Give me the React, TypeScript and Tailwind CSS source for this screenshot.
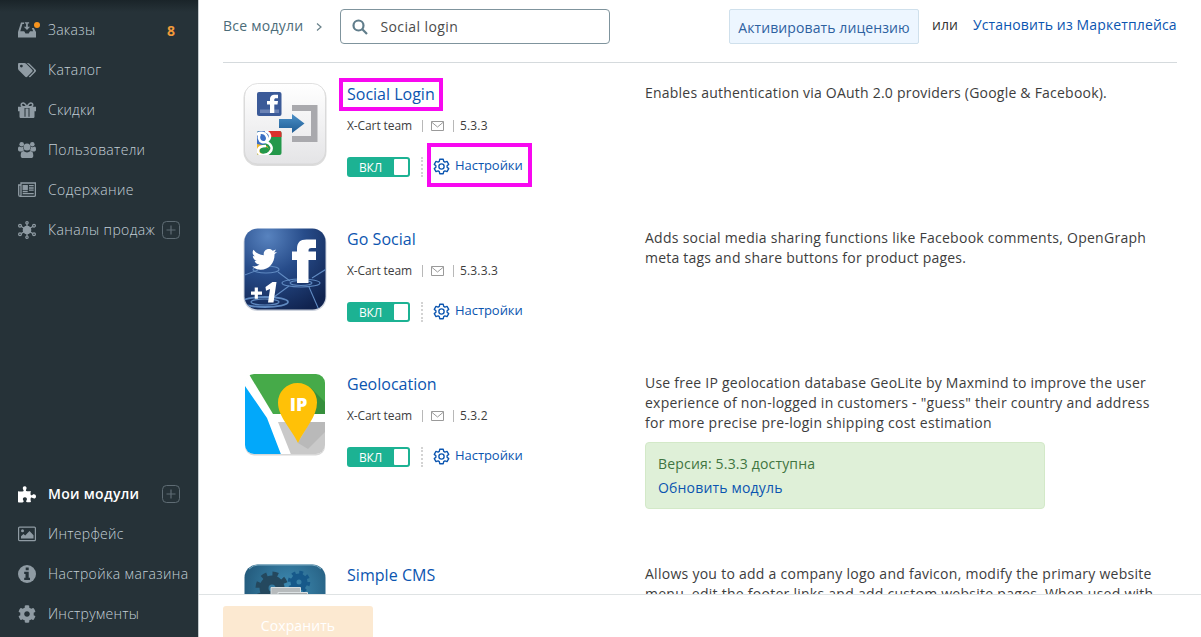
import type { ReactNode } from "react";
import { FaCog } from "react-icons/fa";

const svgClass = "h-[18px] w-[18px] shrink-0";

function InboxIcon() {
  return (
    <span className="relative block h-[18px] w-[18px]">
      <svg viewBox="0 0 18 18" className={svgClass} fill="currentColor">
        <path d="M0 11 3 1.500h3V3H4.400L2.300 10.300h3.900l1.300 2.200h3.200l1.300-2.200h3.200L13.800 7h2l2.200 4v5.500H0z" />
        <path d="M6.800 1.300h4.300v1.200H9.800v3.200h2.300L9 9 5.800 5.700h2.300V2.500H6.800z" />
      </svg>
      <i className="absolute left-[16px] top-[1px] h-[6px] w-[6px] rounded-full bg-[#f7941e]" />
    </span>
  );
}

function TagsIcon() {
  return (
    <svg viewBox="0 0 18 18" className={svgClass} fill="currentColor">
      <path fillRule="evenodd" d="M1.200 2h5.200c.6 0 1.300.3 1.800.8l6 6c.6.6.6 1.300 0 1.900l-5 5c-.6.6-1.300.6-1.900 0l-6-6C.4 8.800 0 8 0 7.400V3.200C0 2.500.5 2 1.200 2zM3.400 3.700a1.400 1.400 0 1 0 0 2.800 1.400 1.400 0 0 0 0-2.800z" />
      <path d="M8.400 2h1.400c.6 0 1.300.3 1.800.8l6 6c.6.6.6 1.300 0 1.900l-5 5c-.7.7-1.300.6-1.900.1l4.900-5c.6-.8.6-1.600-.1-2.300L9.800 2.900C9.300 2.500 8.900 2.200 8.400 2z" />
    </svg>
  );
}

function GiftIcon() {
  return (
    <svg viewBox="0 0 18 18" className={svgClass} fill="currentColor">
      <path d="M0 5.700h18v4.600h-6.500V7h-5v3.300H0zM1.500 10H6.500v7H3c-.9 0-1.500-.5-1.500-1.300zM11.500 10h5v5.700c0 .8-.6 1.300-1.500 1.300h-3.500zM7.500 7.500h3V16h-3zM6 15.700h6V17H6z" />
      <path d="M9 5.700C7.600 3.400 6.700 2 5.200 2c-2.600 0-2.600 3.700 0 3.700zM9 5.700C10.400 3.400 11.300 2 12.800 2c2.600 0 2.600 3.700 0 3.700z" fill="none" stroke="currentColor" strokeWidth="1.500" />
    </svg>
  );
}

function UsersIcon() {
  return (
    <svg viewBox="0 0 18 18" className={svgClass} fill="currentColor">
      <circle cx="3.700" cy="3.300" r="2.300" />
      <circle cx="14.300" cy="3.300" r="2.300" />
      <circle cx="9" cy="6" r="3.500" />
      <path d="M0 8.200C0 6.500.4 5.600 1.300 5.500c1.400.9 2.700.9 3.900.3-.3 1.500.2 2.700 1.100 3.600-1 0-1.800.3-2.500 1H1.600C.6 10.400 0 9.600 0 8.200zM18 8.200c0-1.700-.4-2.600-1.300-2.700-1.400.9-2.700.9-3.900.3.3 1.500-.2 2.700-1.100 3.600 1 0 1.800.3 2.500 1h2.200c1 0 1.600-.8 1.600-2.200z" />
      <path d="M2.700 14.700c0-2.600.8-4.500 2.800-4.600 2.300 1.700 4.700 1.700 7 0 2 .1 2.800 2 2.800 4.600 0 1.400-.9 2.300-2.300 2.300H5c-1.400 0-2.300-.9-2.300-2.300z" />
    </svg>
  );
}

function NewsIcon() {
  return (
    <svg viewBox="0 0 18 18" className={svgClass} fill="none" stroke="currentColor" strokeWidth="1.300">
      <path d="M3 4H.7v9.800c0 1 .6 1.600 1.500 1.600h14c.7 0 1.200-.4 1.200-1.100V2H3v11.700c0 1-.5 1.700-1.200 1.700" />
      <rect x="5.200" y="4.700" width="4" height="3.600" fill="currentColor" />
      <path d="M11 4.700h4.700M11 7h4.700M11 9.200h4.700M4.700 10.500h5M4.700 12.700h11" />
    </svg>
  );
}

function HubIcon() {
  return (
    <svg viewBox="0 0 18 18" className={svgClass} fill="none" stroke="currentColor" strokeWidth="1.200">
      <circle cx="9" cy="9" r="3.700" fill="currentColor" />
      <path d="M9 2v14M2.500 5l13 8M2.500 13l13-8" />
      <g className="fill-[#263238]">
        <circle cx="9" cy="1.800" r="1.200" />
        <circle cx="9" cy="16.200" r="1.200" />
        <circle cx="2" cy="4.700" r="1.400" />
        <circle cx="16" cy="4.700" r="1.400" />
        <circle cx="2" cy="13.300" r="1.400" />
        <circle cx="16" cy="13.300" r="1.400" />
      </g>
    </svg>
  );
}

function PuzzleIcon() {
  return (
    <svg viewBox="0 0 18 18" className={svgClass} fill="currentColor">
      <path d="M0 6.200c2 .4 4 .5 5.300 0 .7-.4.300-1-.2-1.700-.7-1.400-.2-3.200 1.600-3.200s2.300 1.700 1.600 3c-.4.800-.6 1.400 0 1.700 1.200.6 3 .3 4.500 0-.3 1.700-.4 3.200 0 4 .6.700 1.200.1 1.800-.3 1.500-.8 3.400-.1 3.400 1.700 0 1.900-1.800 2.500-3.200 1.700-.8-.5-1.500-.9-2-.2-.4 1-.2 2.500.2 4.100-1.600.4-3.500.5-4.500 0-.7-.4-.2-1.200.2-1.900.7-1.300 0-2.900-1.800-2.900s-2.500 1.500-1.800 2.900c.4.700.9 1.400.3 1.900-.9.700-3.400.8-5.400.2z" />
    </svg>
  );
}

function ImageIcon() {
  return (
    <svg viewBox="0 0 18 18" className={svgClass} fill="currentColor">
      <rect x=".6" y="2.100" width="16.800" height="13.600" rx="1" fill="none" stroke="currentColor" strokeWidth="1.200" />
      <circle cx="4.500" cy="5.800" r="1.500" />
      <path d="M3 13.500v-2.200l2.500-2.400 1.700 1.600L11.500 6l4 4.200v3.300z" />
    </svg>
  );
}

function InfoIcon() {
  return (
    <svg viewBox="0 0 18 18" className={svgClass}>
      <circle cx="9" cy="9" r="9" fill="currentColor" />
      <path d="M7.700 2.500h3v2.700h-3zM6.200 6.700h4.500v6h1.300V15H6.200v-2.300h1.300V9H6.200z" className="fill-[#263238]" />
    </svg>
  );
}

function AddBox() {
  return (
    <svg viewBox="0 0 18 18" className="absolute left-[162px] h-[18px] w-[18px] text-[#5f6c74]" fill="none" stroke="currentColor">
      <rect x=".5" y=".5" width="17" height="17" rx="4" />
      <path d="M9 4.500v9M4.500 9h9" strokeWidth="1.200" />
    </svg>
  );
}

type NavProps = { icon: ReactNode; label: string; track: string; active?: boolean; add?: boolean; count?: string };

function NavItem({ icon, label, track, active, add, count }: NavProps) {
  return (
    <a className={`relative flex h-10 items-center gap-3 whitespace-nowrap pl-[18px] text-sm ${active ? "font-semibold text-white" : "font-light text-[#c3cfd7]"}`}>
      <span className={active ? "text-white" : "text-[#8f9ba3]"}>{icon}</span>
      <span className={track}>{label}</span>
      {count && <span className="ml-auto mr-[23px] pt-[2px] font-bold text-[#f09a3a]">{count}</span>}
      {add && <AddBox />}
    </a>
  );
}

function Sidebar() {
  return (
    <aside className="flex h-full w-[198px] shrink-0 flex-col bg-linear-to-b from-[#1a2429] to-[#263238] to-[12px] pt-[10px] pb-[3px]">
      <nav>
        <NavItem icon={<InboxIcon />} label="Заказы" track="tracking-[0.3px]" count="8" />
        <NavItem icon={<TagsIcon />} label="Каталог" track="tracking-[0.4px]" />
        <NavItem icon={<GiftIcon />} label="Скидки" track="tracking-[0.2px]" />
        <NavItem icon={<UsersIcon />} label="Пользователи" track="tracking-[0.3px]" />
        <NavItem icon={<NewsIcon />} label="Содержание" track="tracking-[0.4px]" />
        <NavItem icon={<HubIcon />} label="Каналы продаж" track="tracking-[0.4px]" add />
      </nav>
      <nav className="mt-auto">
        <NavItem icon={<PuzzleIcon />} label="Мои модули" track="tracking-[0.3px]" active add />
        <NavItem icon={<ImageIcon />} label="Интерфейс" track="tracking-[0.3px]" />
        <NavItem icon={<InfoIcon />} label="Настройка магазина" track="tracking-[0.38px]" />
        <NavItem icon={<FaCog className={svgClass} />} label="Инструменты" track="tracking-[0.25px]" />
      </nav>
    </aside>
  );
}

const tileClass = "h-[86px] w-[86px]";

function LoginTile() {
  return (
    <svg viewBox="0 0 86 86" className={tileClass}>
      <defs>
        <linearGradient id="lt" x2="0" y2="1"><stop stopColor="#fff" /><stop offset="1" stopColor="#e4e4e6" /></linearGradient>
        <linearGradient id="arrow" x2="0" y2="1"><stop stopColor="#4c91c8" /><stop offset="1" stopColor="#1f5c94" /></linearGradient>
        <clipPath id="gc"><rect x="15" y="50" width="24.500" height="24" rx="2" /></clipPath>
      </defs>
      <rect x="1.500" y="3" width="83" height="82" rx="14" fill="#dcdcdc" />
      <rect x="2.500" y="2.500" width="81" height="80.500" rx="13" fill="url(#lt)" stroke="#d4d4d4" strokeWidth=".7" />
      <path d="M50 24h25.500v37H50v-6h19V30H50z" fill="#a9a9ad" />
      <rect x="15" y="11" width="24.500" height="24" rx="2" fill="#3b5a98" />
      <rect x="18" y="28.500" width="19" height="3.500" fill="#6c83b5" />
      <path d="M28 32v-8.500h-3V20h3v-1.500c0-3.500 2-4.800 5-4.800H36v3.600h-2c-1.200 0-1.700.5-1.700 1.500V20H36l-.5 3.500h-3.200V32z" fill="#fff" />
      <path d="M37 38h13v-5l12.500 9.500L50 52v-5H37z" fill="url(#arrow)" />
      <g clipPath="url(#gc)">
        <path d="M15 50h25v24H15z" fill="#23984a" />
        <path d="M15 50h14v8l-6 5-8 2z" fill="#3b6fc4" />
        <path d="M25 50h15v6H28z" fill="#d9302c" />
        <path d="M15 63l10 2 3 5-4 4h-9z" fill="#f0b629" />
        <path d="M22 66c4 0 6 2 5 5-2 3-7 3-9 0-1-3 1-5 4-5z" fill="#23984a" />
        <g fill="none" stroke="#fff" strokeWidth="2.500">
          <path d="M14 55c1-4 9-5 11 1 1 4-2 6-5 5s-4-5-2-8" />
          <path d="M23 50c6 2 7 7 1 11 6 2 7 7 4 10-3 4-12 4-12-1 0-3 3-5 8-5" />
        </g>
      </g>
    </svg>
  );
}

function SocialTile() {
  return (
    <svg viewBox="0 0 86 86" className={tileClass}>
      <defs>
        <radialGradient id="sky" cx=".3" cy=".12" r=".95"><stop stopColor="#5883bf" /><stop offset=".45" stopColor="#274c8a" /><stop offset="1" stopColor="#10234f" /></radialGradient>
        <clipPath id="sr"><rect x="2.500" y="2.500" width="81" height="81" rx="13" /></clipPath>
      </defs>
      <rect x="1.500" y="3" width="83" height="82" rx="14" fill="#ccd2dd" />
      <g clipPath="url(#sr)">
        <path d="M0 0h86v86H0z" fill="url(#sky)" />
        <g fill="none" stroke="#5f89c0" strokeWidth="1.100">
          <path d="M0 50 16 44M36 46l12 9M70 52 86 42M47 60 32 71M67 61l10 23" />
          <ellipse cx="24" cy="43.500" rx="13" ry="3.500" />
          <ellipse cx="59" cy="57" rx="19" ry="4" />
          <ellipse cx="59" cy="57" rx="11" ry="2.500" />
          <ellipse cx="23" cy="76" rx="23" ry="5" strokeWidth="1.800" />
          <ellipse cx="23" cy="76" rx="14" ry="3" />
        </g>
      </g>
      <path transform="translate(9 23) scale(1.220)" d="M1 14.200c2.600.3 4.300-.2 6-1.500-2-.1-3.300-1.100-4-2.900h1.600C2.500 9 1.500 7.500 1.500 5.600c.5.3 1 .4 1.600.4C1.200 4.500.9 2.500 2 .7c2.300 2.700 5 4.200 8.500 4.400C10 2.200 12 0 14.600 0c1.400 0 2.400.5 3.200 1.400L20.500.5 19 2.900l2.300-.5-2 2c.1 6.700-4.300 12.600-11.500 12.600-3 0-5-1-6.800-2.800z" fill="#fff" />
      <path d="M55 57V34h-5v-8.500h5V23c0-6.500 3-9.500 9.500-9.500H74V22h-4.500c-2.500 0-3 1-3 3v.5H74V34h-7.500v23z" fill="#fff" />
      <path d="M9 65.500h3.700v-4h3.200v4h4.100v3.200h-4.100v4h-3.200v-4H9z" fill="#fff" />
      <path d="M23.500 61l7-5h4l-3 20.500h-5.500l2-13.500-4 1.800z" fill="#fff" />
    </svg>
  );
}

function GeoTile() {
  return (
    <svg viewBox="0 0 86 86" className={tileClass}>
      <defs>
        <clipPath id="gr"><rect x="3" y="3" width="80" height="80" rx="9" /></clipPath>
      </defs>
      <rect x="3" y="4.500" width="80" height="80" rx="9" fill="#d8d8d8" />
      <g clipPath="url(#gr)">
        <path d="M0 0h86v86H0z" fill="#fff" />
        <path d="M5 0h81v43H31z" fill="#46aa49" />
        <path d="M0 10 3 15 25 47 40 86H0z" fill="#02a8fa" />
        <path d="M36 51h50v35H50z" fill="#c9c9c9" />
        <path d="M69 17 86 34v9H70z" fill="#368f3c" />
        <path d="M56 72l12-21h18v7L66 78z" fill="#b9b9b9" />
      </g>
      <path d="M56 72C49 57 36 46 36 31.500a19.500 19.500 0 0 1 39 0C75 46 63 57 56 72z" fill="#ffc107" />
      <text x="56.500" y="39.500" textAnchor="middle" className="fill-white font-['Open_Sans'] text-[18px] font-extrabold">IP</text>
    </svg>
  );
}

function CmsTile() {
  return (
    <svg viewBox="0 0 86 86" className={tileClass}>
      <defs>
        <radialGradient id="cg" cx=".55" cy=".3" r=".8"><stop stopColor="#3f8db5" /><stop offset="1" stopColor="#194766" /></radialGradient>
      </defs>
      <rect x="2.500" y="2.500" width="81" height="81" rx="13" fill="url(#cg)" />
      <path d="M7 7q4-4 9-4h54q5 0 9 4" fill="none" stroke="#7baac1" strokeWidth="1" />
      <g fill="none">
        <circle cx="30" cy="26" r="8" stroke="#24485e" strokeWidth="9" />
        <circle cx="30" cy="26" r="14" stroke="#24485e" strokeWidth="5" strokeDasharray="5.500 5.500" />
        <circle cx="57" cy="20" r="5.500" stroke="#17598a" strokeWidth="6" />
        <circle cx="57" cy="20" r="9.500" stroke="#17598a" strokeWidth="3.500" strokeDasharray="3.730 3.730" />
      </g>
      <path d="M29 25.500h29.500v40H29z" fill="#b7bbbd" stroke="#d8dddf" />
      <path d="M36 30.500h29.500v40H36z" fill="#a6aaac" stroke="#dce1e3" />
    </svg>
  );
}

function GearIcon() {
  return (
    <svg viewBox="0 0 24 24" className="h-[17px] w-[17px]" fill="none" stroke="currentColor" strokeWidth="1.900" strokeLinejoin="round">
      <path d="M9.500 1.800h5l.6 3 1.700 1 3-1 2.400 4.200-2.300 2v2l2.300 2-2.400 4.200-3-1-1.700 1-.6 3h-5l-.6-3-1.700-1-3 1L1.800 15l2.300-2v-2l-2.300-2 2.400-4.200 3 1 1.700-1z" />
      <circle cx="12" cy="12" r="3.700" />
    </svg>
  );
}

type ModuleProps = {
  tile: ReactNode;
  name: string;
  nameTrack: string;
  version: string;
  height: string;
  marked?: boolean;
  children: ReactNode;
};

function ModuleRow({ tile, name, nameTrack, version, height, marked, children }: ModuleProps) {
  return (
    <article className={`flex shrink-0 items-start ${height}`}>
      <div className="-mt-px ml-[19px] shrink-0">{tile}</div>
      <div className="ml-[19px] w-[298px] shrink-0">
        <div className="relative flex h-[24px] items-center">
          <a className={`text-base text-[#0b55b0] ${nameTrack}`}>{name}</a>
          {marked && <span className="absolute -left-[8px] -top-[4px] h-[33px] w-[104px] border-4 border-[#f808f0]" />}
        </div>
        <div className="mt-[10px] flex h-5 items-center whitespace-nowrap text-xs text-[#3d3d3d]">
          <span className="tracking-[-0.1px]">X-Cart team</span>
          <i className="ml-[10px] h-3 w-px bg-[#b8b8b8]" />
          <svg viewBox="0 0 13 10" className="ml-[8px] h-[10px] w-[13px]" fill="none" stroke="#9a9a9a">
            <path d="M.5.5h12v9H.5zM.5 1l6 5 6-5" />
          </svg>
          <i className="ml-[9px] h-3 w-px bg-[#b8b8b8]" />
          <span className="ml-[6px] tracking-[0.15px]">{version}</span>
        </div>
        <div className="relative mt-[21px] flex h-5 items-center">
          <span className="flex h-5 w-[63px] items-center justify-between rounded-[3px] bg-[#1cb293] pl-[12px] pr-[2px] text-xs text-white">
            <span className="pt-px tracking-[-0.2px]">ВКЛ</span>
            <i className="h-4 w-[14px] rounded-[1px] bg-white" />
          </span>
          <i className="ml-[11px] h-5 border-l-2 border-dotted border-[#d3d3d3]" />
          <a className="ml-[10px] flex items-center gap-[5px] pb-[2px] text-[13px] text-[#0b55b0]">
            <GearIcon />
            <span className="tracking-[-0.05px]">Настройки</span>
          </a>
          {marked && <span className="absolute -top-[14px] left-[80px] h-[44px] w-[105px] border-4 border-[#f808f0]" />}
        </div>
      </div>
      <div className="pt-[1px] text-sm leading-5 whitespace-nowrap text-[#3d3d3d]">{children}</div>
    </article>
  );
}

function Header() {
  return (
    <header className="flex h-[63px] shrink-0 items-start whitespace-nowrap border-b border-[#d5dadd] text-sm">
      <a className="mt-[16px] leading-5 tracking-[0.25px] text-[#4c6c79]">Все модули</a>
      <svg viewBox="0 0 6 8" className="ml-[13px] mt-[23px] h-[8px] w-[6px]" fill="none" stroke="#688089" strokeWidth="1.200">
        <path d="m1 .5 4 3.500-4 3.500" />
      </svg>
      <div className="ml-[18px] mt-[9px] flex h-[35px] w-[270px] items-center rounded-[4px] border border-[#7f949d] pl-[11px]">
        <svg viewBox="0 0 16 16" className="h-4 w-4" fill="none" stroke="#607d8b" strokeWidth="2.200">
          <circle cx="6.500" cy="6.500" r="5" />
          <path d="m10.300 10.300 4.700 4.700" />
        </svg>
        <span className="ml-[12px] tracking-[0.4px] text-[#4b4b4b]">Social login</span>
      </div>
      <div className="ml-auto flex items-start">
        <button className="mt-[9px] h-[35px] w-[190px] rounded-[2px] border border-[#cfe0ec] bg-[#edf6ff] pt-[2px] text-[#2d619f]">
          <span className="tracking-[0.1px]">Активировать лицензию</span>
        </button>
        <span className="ml-[13px] mt-[15px] w-[27px] leading-5 tracking-[0.1px] text-[#333]">или</span>
        <a className="ml-[14px] mt-[15px] w-[204px] leading-5 tracking-[0.13px] text-[#0b55b0]">Установить из Маркетплейса</a>
      </div>
    </header>
  );
}

export default function App() {
  return (
    <div className="relative flex h-[637px] w-[1201px] overflow-hidden bg-white font-['Open_Sans','Noto_Sans',sans-serif]">
      <Sidebar />
      <div className="flex min-w-0 flex-1 flex-col border-l border-[#c4cacd]">
        <main className="flex h-[594px] shrink-0 flex-col overflow-hidden pl-[24px] pr-6">
          <Header />
          <section className="flex flex-col pt-[19px]">
            <ModuleRow tile={<LoginTile />} name="Social Login" nameTrack="tracking-[0px]" version="5.3.3" height="h-[145px]" marked>
              <p className="tracking-[0.22px]">Enables authentication via OAuth 2.0 providers (Google &amp; Facebook).</p>
            </ModuleRow>
            <ModuleRow tile={<SocialTile />} name="Go Social" nameTrack="tracking-[0.05px]" version="5.3.3.3" height="h-[145px]">
              <p className="tracking-[0.27px]">Adds social media sharing functions like Facebook comments, OpenGraph</p>
              <p className="tracking-[0.22px]">meta tags and share buttons for product pages.</p>
            </ModuleRow>
            <ModuleRow tile={<GeoTile />} name="Geolocation" nameTrack="tracking-[0px]" version="5.3.2" height="h-[191px]">
              <p className="tracking-[0.24px]">Use free IP geolocation database GeoLite by Maxmind to improve the user</p>
              <p className="tracking-[0.25px]">experience of non-logged in customers - "guess" their country and address</p>
              <p className="tracking-[0.28px]">for more precise pre-login shipping cost estimation</p>
              <div className="mt-[9px] h-[67px] w-[400px] rounded-[4px] border border-[#d3e9c8] bg-[#dff0d8] px-[12px] pt-[9px] leading-6">
                <p className="tracking-[0.18px] text-[#3f7541]">Версия: 5.3.3 доступна</p>
                <p className="tracking-[0.18px] text-[#0b55b0]">Обновить модуль</p>
              </div>
            </ModuleRow>
            <ModuleRow tile={<CmsTile />} name="Simple CMS" nameTrack="tracking-[0.05px]" version="5.3.2" height="h-[145px]">
              <p className="tracking-[0.27px]">Allows you to add a company logo and favicon, modify the primary website</p>
              <p className="tracking-[0.26px]">menu, edit the footer links and add custom website pages. When used with</p>
            </ModuleRow>
          </section>
        </main>
        <footer className="flex flex-1 overflow-hidden border-t border-[#dfe3e4] bg-white pl-[24px] pt-[11px]">
          <button className="h-[37px] w-[150px] shrink-0 rounded-[3px] bg-[#fce9d1] pt-[2px] text-sm tracking-[0.1px] text-white">Сохранить</button>
        </footer>
      </div>
    </div>
  );
}
